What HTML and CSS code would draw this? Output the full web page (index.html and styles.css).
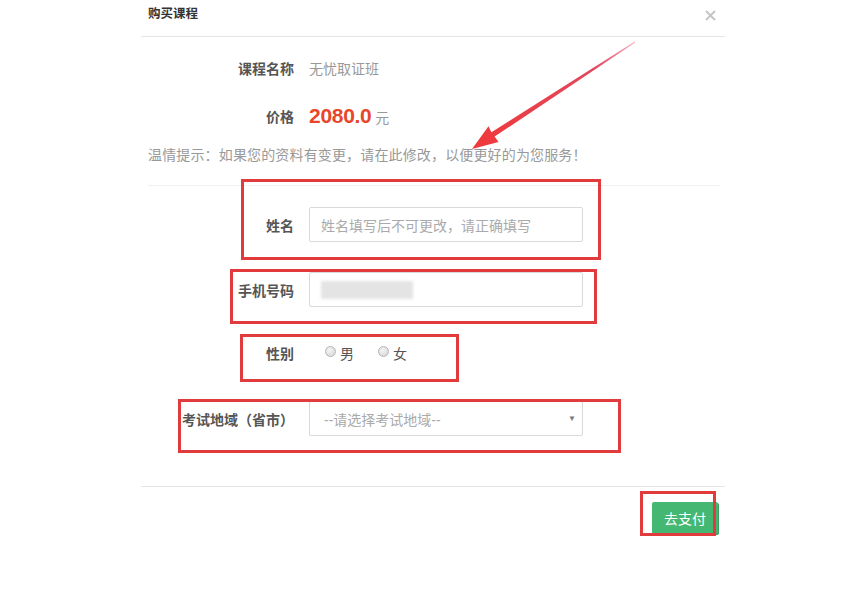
FILE: index.html
```html
<!DOCTYPE html>
<html lang="zh-CN">
<head>
<meta charset="utf-8">
<title>购买课程</title>
<link rel="stylesheet" href="styles.css">
</head>
<body>
<div class="page">
  <div class="modal">
    <div class="modal-header">
      <span class="modal-title">购买课程</span>
      <svg class="close" width="11" height="11" viewBox="0 0 11 11"><path d="M1 1L10 10M10 1L1 10" stroke="#c4c4c4" stroke-width="1.8"/></svg>
    </div>
    <div class="modal-body">
      <div class="info-row first">
        <span class="label">课程名称</span>
        <span class="value">无忧取证班</span>
      </div>
      <div class="info-row price-row">
        <span class="label">价格</span>
        <span class="value"><span class="price">2080.0</span> 元</span>
      </div>
      <p class="tip">温情提示：如果您的资料有变更，请在此修改，以便更好的为您服务！</p>
      <div class="divider"></div>
      <div class="form-row name-row">
        <label class="label">姓名</label>
        <div class="input"><span class="placeholder">姓名填写后不可更改，请正确填写</span></div>
      </div>
      <div class="form-row phone-row">
        <label class="label">手机号码</label>
        <div class="input"><span class="blurred"></span></div>
      </div>
      <div class="form-row gender-row">
        <label class="label">性别</label>
        <div class="radios">
          <span class="radio-item"><span class="radio"></span>男</span>
          <span class="radio-item"><span class="radio"></span>女</span>
        </div>
      </div>
      <div class="form-row region-row">
        <label class="label">考试地域（省市）</label>
        <div class="input select"><span class="placeholder">--请选择考试地域--</span><span class="caret">▼</span></div>
      </div>
    </div>
    <div class="modal-footer">
      <button class="pay">去支付</button>
    </div>
  </div>

  <div class="mark m1"></div>
  <div class="mark m2"></div>
  <div class="mark m3"></div>
  <div class="mark m4"></div>
  <div class="mark m5"></div>
  <svg class="arrow" width="855" height="593" viewBox="0 0 855 593">
    <defs>
      <linearGradient id="ag" x1="635" y1="42" x2="472" y2="148" gradientUnits="userSpaceOnUse">
        <stop offset="0" stop-color="#f2b6c4"/>
        <stop offset="0.25" stop-color="#e2475e"/>
        <stop offset="1" stop-color="#f0393a"/>
      </linearGradient>
    </defs>
    <polygon fill="url(#ag)" points="472,149 498.5,142 494.6,136.6 635.3,42.4 634.7,41.6 491.4,132.2 488.5,126.3"/>
  </svg>
</div>
</body>
</html>
```

FILE: styles.css
```css
* { box-sizing: border-box; }
html, body { margin: 0; padding: 0; background: #fff; }
body {
  font-family: "Liberation Sans", "Noto Sans CJK SC", sans-serif;
  font-size: 14px;
  color: #555;
}
.page { position: relative; width: 855px; height: 593px; }
.modal { margin-left: 141px; width: 584px; }
.modal-header {
  height: 37px;
  border-bottom: 1px solid #e5e5e5;
  display: flex;
  justify-content: space-between;
  align-items: flex-start;
  padding: 5px 9px 0 7px;
}
.modal-title { font-size: 12.5px; font-weight: bold; color: #333; line-height: 18px; }
.close { margin-top: 5px; }

.info-row, .form-row { display: flex; align-items: center; }
.label {
  width: 153px;
  flex: none;
  text-align: right;
  font-weight: bold;
  color: #555;
  font-size: 14px;
}
.value { margin-left: 15px; color: #999; font-size: 14px; }
.info-row { height: 20px; }
.info-row.first { margin-top: 21px; }
.price-row { margin-top: 25px; height: 26px; }
.price {
  color: #e8462a;
  font-weight: bold;
  font-size: 21px;
  letter-spacing: -0.3px;
}
.tip {
  margin: 16px 0 0;
  padding-left: 7px;
  line-height: 20px;
  color: #999;
  font-size: 14px;
  letter-spacing: 0.15px;
}
.divider { margin: 20px 5px 0 7px; height: 1px; background: #f1f1f1; }

.input {
  margin-left: 15px;
  width: 274px;
  height: 35px;
  border: 1px solid #d9d9d9;
  border-radius: 2px;
  display: flex;
  align-items: center;
  padding-left: 11px;
  position: relative;
  background: #fff;
}
.placeholder { color: #aaa; font-size: 14px; }
.name-row { margin-top: 21px; }
.phone-row { margin-top: 30px; }
.blurred {
  display: block;
  width: 92px;
  height: 18px;
  background: #e4e4e4;
  filter: blur(1.5px);
  margin-top: 1px;
}
.gender-row { margin-top: 36px; height: 20px; }
.radios { margin-left: 31px; display: flex; gap: 24px; }
.radio-item { display: flex; align-items: center; color: #555; font-size: 14px; }
.radio {
  width: 11px; height: 11px;
  border-radius: 50%;
  border: 1px solid #b5b5b5;
  background: radial-gradient(circle at 40% 35%, #f4f4f4, #d4d4d4);
  margin-right: 4px;
  margin-top: -3px;
}
.region-row { margin-top: 38px; }
.select { padding-left: 14px; justify-content: space-between; padding-right: 6px; }
.caret { font-size: 8px; color: #777; }

.modal-footer {
  margin-top: 50px;
  border-top: 1px solid #e5e5e5;
  display: flex;
  justify-content: flex-end;
  padding: 15px 7px 0 0;
}
.pay {
  width: 66px;
  height: 32px;
  border: none;
  border-radius: 2px;
  background: #44b872;
  box-shadow: 1px 1px 0 #3a9d62;
  color: #fff;
  font-family: "Liberation Sans", "Noto Sans CJK SC", sans-serif;
  font-size: 14px;
  padding: 0;
}

.mark { position: absolute; border: 3px solid #e23b3e; }
.m1 { left: 241px; top: 179px; width: 360px; height: 81px; }
.m2 { left: 230px; top: 269px; width: 367px; height: 55px; }
.m3 { left: 240px; top: 334px; width: 219px; height: 48px; }
.m4 { left: 178px; top: 399px; width: 443px; height: 54px; }
.m5 { left: 640px; top: 491px; width: 76px; height: 45px; }
.arrow { position: absolute; left: 0; top: 0; pointer-events: none; }
```
